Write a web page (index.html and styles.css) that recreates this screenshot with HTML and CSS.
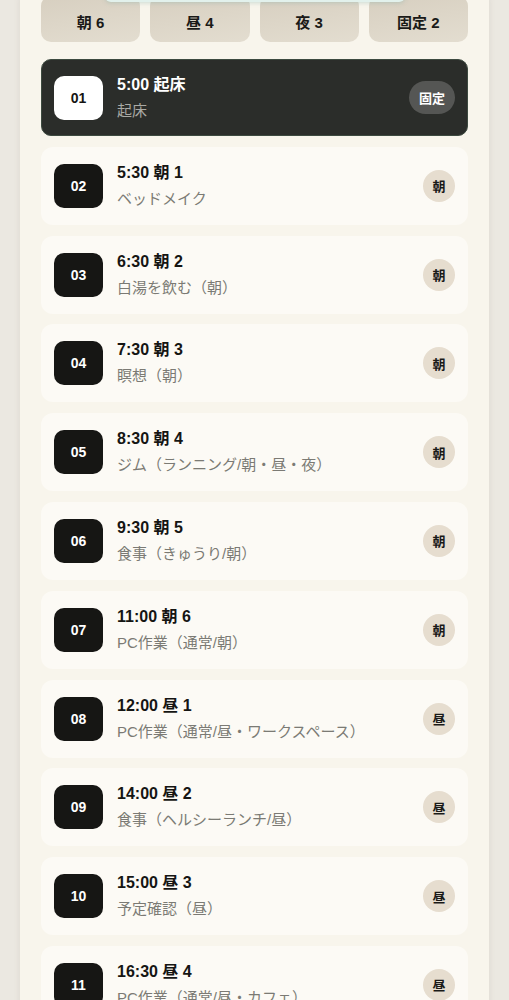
FILE: index.html
```html
<!DOCTYPE html>
<html lang="ja">
<head>
<meta charset="utf-8">
<title>ルーティン</title>
<link rel="stylesheet" href="styles.css">
</head>
<body>
<div class="panel">
  <div class="peek"></div>
  <div class="chips">
    <div class="chip">朝 6</div>
    <div class="chip">昼 4</div>
    <div class="chip">夜 3</div>
    <div class="chip">固定 2</div>
  </div>
  <div class="list">
    <div class="card card-dark">
      <div class="num num-light">01</div>
      <div class="text"><div class="title">5:00 起床</div><div class="sub">起床</div></div>
      <div class="pill">固定</div>
    </div>
    <div class="card">
      <div class="num">02</div>
      <div class="text"><div class="title">5:30 朝 1</div><div class="sub">ベッドメイク</div></div>
      <div class="badge">朝</div>
    </div>
    <div class="card">
      <div class="num">03</div>
      <div class="text"><div class="title">6:30 朝 2</div><div class="sub">白湯を飲む（朝）</div></div>
      <div class="badge">朝</div>
    </div>
    <div class="card">
      <div class="num">04</div>
      <div class="text"><div class="title">7:30 朝 3</div><div class="sub">瞑想（朝）</div></div>
      <div class="badge">朝</div>
    </div>
    <div class="card">
      <div class="num">05</div>
      <div class="text"><div class="title">8:30 朝 4</div><div class="sub">ジム（ランニング/朝・昼・夜）</div></div>
      <div class="badge">朝</div>
    </div>
    <div class="card">
      <div class="num">06</div>
      <div class="text"><div class="title">9:30 朝 5</div><div class="sub">食事（きゅうり/朝）</div></div>
      <div class="badge">朝</div>
    </div>
    <div class="card">
      <div class="num">07</div>
      <div class="text"><div class="title">11:00 朝 6</div><div class="sub">PC作業（通常/朝）</div></div>
      <div class="badge">朝</div>
    </div>
    <div class="card">
      <div class="num">08</div>
      <div class="text"><div class="title">12:00 昼 1</div><div class="sub">PC作業（通常/昼・ワークスペース）</div></div>
      <div class="badge">昼</div>
    </div>
    <div class="card">
      <div class="num">09</div>
      <div class="text"><div class="title">14:00 昼 2</div><div class="sub">食事（ヘルシーランチ/昼）</div></div>
      <div class="badge">昼</div>
    </div>
    <div class="card">
      <div class="num">10</div>
      <div class="text"><div class="title">15:00 昼 3</div><div class="sub">予定確認（昼）</div></div>
      <div class="badge">昼</div>
    </div>
    <div class="card">
      <div class="num">11</div>
      <div class="text"><div class="title">16:30 昼 4</div><div class="sub">PC作業（通常/昼・カフェ）</div></div>
      <div class="badge">昼</div>
    </div>
  </div>
</div>
</body>
</html>
```

FILE: styles.css
```css
html, body {
  margin: 0;
  padding: 0;
}
body {
  background: #ebe8e1;
  font-family: "Liberation Sans", "Noto Sans CJK JP", sans-serif;
  color: #151513;
  overflow: hidden;
}
.panel {
  position: relative;
  margin: -4px 20px 0;
  padding: 0 21px 30px;
  background: #f8f5ec;
  border-radius: 0 0 24px 24px;
  box-shadow: 0 0 6px rgba(120, 110, 90, 0.12);
}
.peek {
  position: absolute;
  left: 85px;
  top: 0;
  width: 300px;
  height: 6px;
  background: #e2f1ec;
  border-radius: 0 0 12px 12px;
  box-shadow: 0 1px 4px rgba(120, 170, 160, 0.35);
  z-index: 2;
}
.chips {
  display: grid;
  grid-template-columns: repeat(4, 1fr);
  gap: 10px;
}
.chip {
  height: 46px;
  border-radius: 10px;
  background: linear-gradient(170deg, #d7cfc0 0%, #e3ddd0 100%);
  display: flex;
  align-items: center;
  justify-content: center;
  padding-top: 4px;
  box-sizing: border-box;
  font-weight: 700;
  font-size: 15px;
  color: #1a1a18;
}
.list {
  display: flex;
  flex-direction: column;
  gap: 10.8px;
  margin-top: 17px;
}
.card {
  height: 78px;
  box-sizing: border-box;
  display: flex;
  align-items: center;
  gap: 14px;
  padding: 0 13px;
  background: #fcfaf5;
  border-radius: 12px;
}
.card-dark {
  height: 77px;
  background: #2b2d2a;
  border: 1px solid #3d4a40;
  border-radius: 10px;
  padding: 0 12px;
}
.num {
  width: 49px;
  height: 44px;
  flex: none;
  border-radius: 10px;
  background: #161614;
  color: #fff;
  font-weight: 700;
  font-size: 14px;
  display: flex;
  align-items: center;
  justify-content: center;
}
.num-light {
  background: #fff;
  color: #151513;
}
.text {
  flex: 1;
  min-width: 0;
}
.title {
  font-weight: 700;
  font-size: 16px;
  line-height: 20px;
  color: #151513;
  white-space: nowrap;
}
.sub {
  margin-top: 6px;
  font-size: 15px;
  line-height: 20px;
  color: #7b7a74;
  white-space: nowrap;
}
.card-dark .title {
  color: #ffffff;
}
.card-dark .sub {
  color: #a9a9a4;
}
.badge {
  width: 32px;
  height: 32px;
  flex: none;
  border-radius: 50%;
  background: #e6ddcf;
  display: flex;
  align-items: center;
  justify-content: center;
  font-weight: 700;
  font-size: 13px;
  color: #1a1a18;
}
.pill {
  flex: none;
  height: 33px;
  padding: 0 10px;
  border-radius: 17px;
  background: #555654;
  color: #fff;
  font-weight: 700;
  font-size: 13px;
  display: flex;
  align-items: center;
  justify-content: center;
}
```
